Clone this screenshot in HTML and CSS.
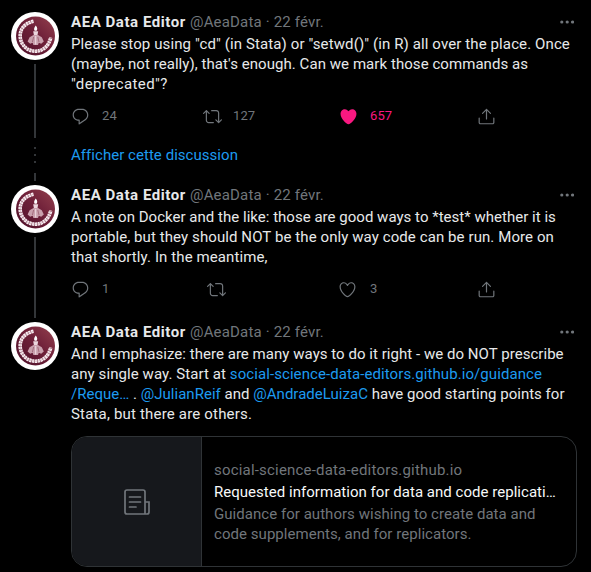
FILE: index.html
```
<!DOCTYPE html>
<html lang="fr">
<head>
<meta charset="utf-8">
<title>AEA Data Editor</title>
<link rel="stylesheet" href="styles.css">
</head>
<body>
<svg class="defs" width="0" height="0" aria-hidden="true">
  <defs>
    <linearGradient id="wine" x1="0" y1="1" x2="1" y2="0"><stop offset="0" stop-color="#4d1029"/><stop offset=".55" stop-color="#6f2039"/><stop offset="1" stop-color="#94414e"/></linearGradient>
    <symbol id="avatar" viewBox="0 0 48 48">
      <circle cx="24" cy="24" r="24" fill="#fff"/>
      <circle cx="24.500" cy="24" r="19.500" fill="url(#wine)"/>
      <path d="M22.500 9.300C13 11.500 8.700 17.500 9.200 25C10 33.500 16.500 39.200 24.500 39.200C32 39.200 37.500 34.500 39.800 25.500" fill="none" stroke="#f8eef2" stroke-width="3.600" stroke-dasharray="2.300 .5"/>
      <path d="M22.500 9.300C13 11.500 8.700 17.500 9.200 25C10 33.500 16.500 39.200 24.500 39.200C32 39.200 37.500 34.500 39.800 25.500" fill="none" stroke="#cfa9b6" stroke-width=".6"/>
      <path d="M24.700 13.500c2 2 1.800 4 .9 5.200h-2c-1-1.500-.4-3.300 1.100-5.200z" fill="#fff"/>
      <path d="M22.200 19.200h5l-.8 4.200h-3.400z" fill="#ecd6dd"/>
      <path d="M22.500 23h4.500l3.800 2.200 2 4.300-2.600 2.300-2.400-1-.8 2.200h-4.600l-.8-2.200-2.400 1-2.600-2.300 2-4.300z" fill="#c9a0ad"/>
      <path d="M22.600 25l-1.200 5M26.800 25l1.200 5" stroke="#8a4a5d" stroke-width=".6"/>
      <path d="M24.700 24v8.500" stroke="#efdde3" stroke-width="1"/>
    </symbol>
    <symbol id="reply" viewBox="0 0 24 24"><path d="M14.046 2.242l-4.148-.01h-.002c-4.374 0-7.800 3.427-7.800 7.802 0 4.098 3.186 7.206 7.465 7.370v3.828c0 .108.044.286.120.403.142.225.384.347.632.347.138 0 .277-.038.402-.118.264-.168 6.473-4.140 8.088-5.506 1.902-1.610 3.040-3.970 3.043-6.312v-.017c-.006-4.367-3.430-7.787-7.800-7.788zm3.787 12.972c-1.134.960-4.862 3.405-6.772 4.643V16.670c0-.414-.335-.750-.750-.750h-.396c-3.660 0-6.318-2.476-6.318-5.886 0-3.534 2.768-6.302 6.300-6.302l4.147.010h.002c3.532 0 6.300 2.766 6.302 6.296-.003 1.910-.942 3.844-2.514 5.176z"/></symbol>
    <symbol id="retweet" viewBox="0 0 24 24"><path d="M23.770 15.670c-.292-.293-.767-.293-1.060 0l-2.220 2.220V7.650c0-2.068-1.683-3.750-3.750-3.750h-5.850c-.414 0-.750.336-.750.750s.336.750.750.750h5.850c1.240 0 2.250 1.010 2.250 2.250v10.240l-2.220-2.220c-.293-.293-.768-.293-1.060 0s-.294.768 0 1.060l3.500 3.500c.145.147.337.220.530.220s.383-.072.530-.220l3.500-3.500c.294-.292.294-.767 0-1.060zm-10.660 3.280H7.260c-1.240 0-2.250-1.010-2.250-2.250V6.460l2.220 2.220c.148.147.340.220.532.220s.384-.073.530-.220c.293-.293.293-.768 0-1.060l-3.500-3.500c-.293-.294-.768-.294-1.060 0l-3.500 3.500c-.294.292-.294.767 0 1.060s.767.293 1.060 0l2.220-2.220V16.700c0 2.068 1.683 3.750 3.750 3.750h5.850c.414 0 .750-.336.750-.750s-.337-.750-.750-.750z"/></symbol>
    <symbol id="heart" viewBox="0 0 24 24"><path d="M12 21.638h-.014C9.403 21.590 1.950 14.856 1.950 8.478c0-3.064 2.525-5.754 5.403-5.754 2.290 0 3.830 1.580 4.646 2.730.814-1.148 2.354-2.730 4.645-2.730 2.880 0 5.404 2.690 5.404 5.755 0 6.376-7.454 13.110-10.037 13.157H12zM7.354 4.225c-2.080 0-3.903 1.988-3.903 4.255 0 5.740 7.034 11.596 8.550 11.658 1.518-.062 8.550-5.917 8.550-11.658 0-2.267-1.823-4.255-3.903-4.255-2.528 0-3.940 2.936-3.952 2.965-.230.562-1.156.562-1.387 0-.014-.030-1.425-2.965-3.954-2.965z"/></symbol>
    <symbol id="heart-full" viewBox="0 0 24 24"><path d="M12 21.638h-.014C9.403 21.590 1.950 14.856 1.950 8.478c0-3.064 2.525-5.754 5.403-5.754 2.290 0 3.830 1.580 4.646 2.730.814-1.148 2.354-2.730 4.645-2.730 2.880 0 5.404 2.690 5.404 5.755 0 6.376-7.454 13.110-10.037 13.157H12z"/></symbol>
    <symbol id="share" viewBox="0 0 24 24"><path d="M17.530 7.470l-5-5c-.293-.293-.768-.293-1.060 0l-5 5c-.294.293-.294.768 0 1.060s.767.294 1.060 0l3.720-3.720V15c0 .414.336.750.750.750s.750-.336.750-.750V4.810l3.720 3.720c.146.147.338.220.530.220s.384-.072.530-.220c.293-.293.293-.767 0-1.060z"/><path d="M19.708 21.944H4.292C3.028 21.944 2 20.916 2 19.652V14c0-.414.336-.750.750-.750s.750.336.750.750v5.652c0 .437.355.792.792.792h15.416c.437 0 .792-.355.792-.792V14c0-.414.336-.750.750-.750s.750.336.750.750v5.652c0 1.264-1.028 2.292-2.292 2.292z"/></symbol>
    <symbol id="more" viewBox="0 0 14 4"><circle cx="1.800" cy="2" r="1.600"/><circle cx="7.200" cy="2" r="1.600"/><circle cx="12.500" cy="2" r="1.600"/></symbol>
  </defs>
</svg>
<main class="thread">
  <article class="tweet first">
    <div class="rail"><svg class="avatar"><use href="#avatar"/></svg><i class="line"></i></div>
    <div class="content">
      <header class="head"><b class="name">AEA Data Editor</b><span class="meta">@AeaData · 22 févr.</span><svg class="more"><use href="#more"/></svg></header>
      <p class="text"><span class="row t1">Please stop using "cd" (in Stata) or "setwd()" (in R) all over the place. Once</span><span class="row t2">(maybe, not really), that's enough. Can we mark those commands as</span><span class="row t3">"deprecated"?</span></p>
      <div class="actions counted">
        <span class="action"><svg><use href="#reply"/></svg>24</span>
        <span class="action"><svg><use href="#retweet"/></svg>127</span>
        <span class="action liked"><svg><use href="#heart-full"/></svg>657</span>
        <span class="action"><svg><use href="#share"/></svg></span>
      </div>
    </div>
  </article>
  <div class="more-row">
    <div class="dots"><i></i><i></i><i></i><b></b></div>
    <a class="show">Afficher cette discussion</a>
  </div>
  <article class="tweet middle">
    <div class="rail"><svg class="avatar"><use href="#avatar"/></svg><i class="line"></i></div>
    <div class="content">
      <header class="head"><b class="name">AEA Data Editor</b><span class="meta">@AeaData · 22 févr.</span><svg class="more"><use href="#more"/></svg></header>
      <p class="text"><span class="row t4">A note on Docker and the like: those are good ways to *test* whether it is</span><span class="row t5">portable, but they should NOT be the only way code can be run. More on</span><span class="row t6">that shortly. In the meantime,</span></p>
      <div class="actions">
        <span class="action"><svg><use href="#reply"/></svg>1</span>
        <span class="action"><svg><use href="#retweet"/></svg></span>
        <span class="action"><svg><use href="#heart"/></svg>3</span>
        <span class="action"><svg><use href="#share"/></svg></span>
      </div>
    </div>
  </article>
  <article class="tweet">
    <div class="rail"><svg class="avatar"><use href="#avatar"/></svg></div>
    <div class="content">
      <header class="head"><b class="name">AEA Data Editor</b><span class="meta">@AeaData · 22 févr.</span><svg class="more"><use href="#more"/></svg></header>
      <p class="text"><span class="row t7">And I emphasize: there are many ways to do it right - we do NOT prescribe</span><span class="row t8">any single way. Start at <a>social-science-data-editors.github.io/guidance</a></span><span class="row t9"><a>/Reque…</a> . <a>@JulianReif</a> and <a>@AndradeLuizaC</a> have good starting points for</span><span class="row t10">Stata, but there are others.</span></p>
      <section class="card">
        <div class="thumb"><svg viewBox="0 0 26 26"><path d="M3 1h16q2 0 2 2v22H3q-2 0-2-2V3q0-2 2-2zM21 13h4v10q0 2-2 2h-2M5.500 8h11M5.500 13h11M5.500 18h6.500"/></svg></div>
        <div class="info"><span class="row c1">social-science-data-editors.github.io</span><span class="row c2">Requested information for data and code replicati…</span><span class="row c3">Guidance for authors wishing to create data and</span><span class="row c4">code supplements, and for replicators.</span></div>
      </section>
    </div>
  </article>
</main>
</body>
</html>
```
FILE: styles.css
```
* { box-sizing: border-box; }
body {
  margin: 0;
  background: #000;
  color: #e7e9ea;
  font: 15px/20px Roboto, "Liberation Sans", sans-serif;
  overflow: hidden;
}
.defs { position: absolute; }
.thread { padding: 12px 14px 0 11px; }
.tweet { display: flex; gap: 12px; }
.first { height: 126px; }
.middle { height: 137px; }
.rail { width: 48px; flex: none; display: flex; flex-direction: column; align-items: center; }
.avatar { width: 48px; height: 48px; flex: none; margin-bottom: 4px; }
.line { width: 2px; flex: 1; background: #333639; }
.middle .line { margin-bottom: 4px; }
.content { flex: 1; min-width: 0; }
.head { display: flex; align-items: center; height: 20px; }
.name { font-weight: 700; letter-spacing: .56px; width: 119px; white-space: nowrap; }
.meta { color: #71767b; letter-spacing: .17px; white-space: nowrap; }
.more { width: 14px; height: 4px; margin: 0 3px 0 auto; fill: #71767b; }
.text { margin: 2px 0 0; }
.row { display: block; height: 20px; white-space: nowrap; }
a { color: #1d9bf0; }
.actions { display: grid; grid-template-columns: 136px 131px 139px 1fr; margin-top: 12px; height: 20px; }
.counted { grid-template-columns: 132px 136px 138px 1fr; }
.action { display: flex; align-items: center; gap: 12px; color: #71767b; font-size: 13px; letter-spacing: .1px; }
.action svg { width: 19px; height: 19px; fill: currentColor; }
.middle .action:nth-child(3) { gap: 13px; }
.counted .action:nth-child(2) { gap: 11px; }
.liked { color: #f91880; }
.more-row { display: flex; height: 47px; }
.dots { width: 48px; margin-right: 12px; padding-top: 9px; display: flex; flex-direction: column; align-items: center; gap: 5px; }
.dots i { width: 2px; height: 2px; background: #333639; flex: none; }
.dots b { width: 2px; height: 8px; background: #333639; margin-top: 5px; flex: none; }
.show { padding-top: 7px; letter-spacing: .04px; }
.card { display: flex; width: 506px; height: 131px; margin-top: 12px; border: 1px solid #2f3336; border-radius: 16px; overflow: hidden; }
.thumb { width: 130px; flex: none; background: #16181c; border-right: 1px solid #2f3336; display: flex; align-items: center; justify-content: center; }
.thumb svg { width: 26px; height: 26px; fill: none; stroke: #71767b; stroke-width: 1.7; stroke-linecap: round; }
.info { padding: 23px 0 0 12px; color: #71767b; }
.t1 { letter-spacing: .112px; }
.t2 { letter-spacing: .06px; }
.t3 { letter-spacing: .42px; }
.t4 { letter-spacing: .022px; }
.t5 { letter-spacing: .09px; }
.t6 { letter-spacing: .1px; }
.t7 { letter-spacing: .04px; }
.t8 { letter-spacing: .08px; }
.t9 { letter-spacing: .02px; }
.t10 { letter-spacing: .18px; }
.c1 { letter-spacing: .19px; }
.c2 { letter-spacing: .03px; color: #f7f9f9; margin: 2px 0; }
.c3 { letter-spacing: .039px; }
.c4 { letter-spacing: .05px; }
```
